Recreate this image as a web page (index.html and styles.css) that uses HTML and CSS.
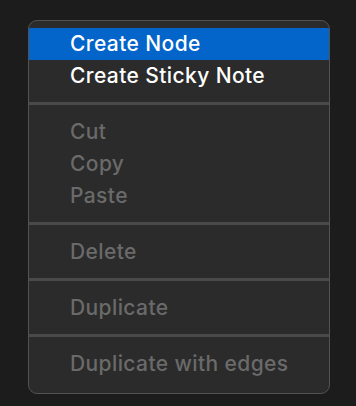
FILE: index.html
```html
<!DOCTYPE html>
<html>
<head>
<meta charset="utf-8">
<link rel="stylesheet" href="styles.css">
</head>
<body>
<div class="menu">
  <div class="item active">Create Node</div>
  <div class="item">Create Sticky Note</div>
  <div class="sep"></div>
  <div class="item disabled">Cut</div>
  <div class="item disabled">Copy</div>
  <div class="item disabled">Paste</div>
  <div class="sep"></div>
  <div class="item disabled">Delete</div>
  <div class="sep"></div>
  <div class="item disabled">Duplicate</div>
  <div class="sep"></div>
  <div class="item disabled">Duplicate with edges</div>
</div>
</body>
</html>
```
FILE: styles.css
```css
html, body {
  margin: 0;
  padding: 0;
  background: #1c1c1c;
}
body {
  padding: 20px 0 0 28px;
  font-family: Inter, "Noto Sans", sans-serif;
}
.menu {
  width: 300px;
  height: 365px;
  box-sizing: content-box;
  background: #2b2b2b;
  border: 1px solid #525252;
  border-radius: 9px;
  padding-top: 7px;
  overflow: hidden;
}
.item {
  height: 32px;
  line-height: 31px;
  padding-left: 41px;
  font-size: 21px;
  font-weight: 500;
  letter-spacing: 0.4px;
  color: #ffffff;
  white-space: nowrap;
}
.item.active {
  background: #0364c9;
}
.item.disabled {
  color: #6a6a6a;
}
.sep {
  height: 3px;
  background: #4a4a4a;
  margin: 10px 0 11px;
}
```
